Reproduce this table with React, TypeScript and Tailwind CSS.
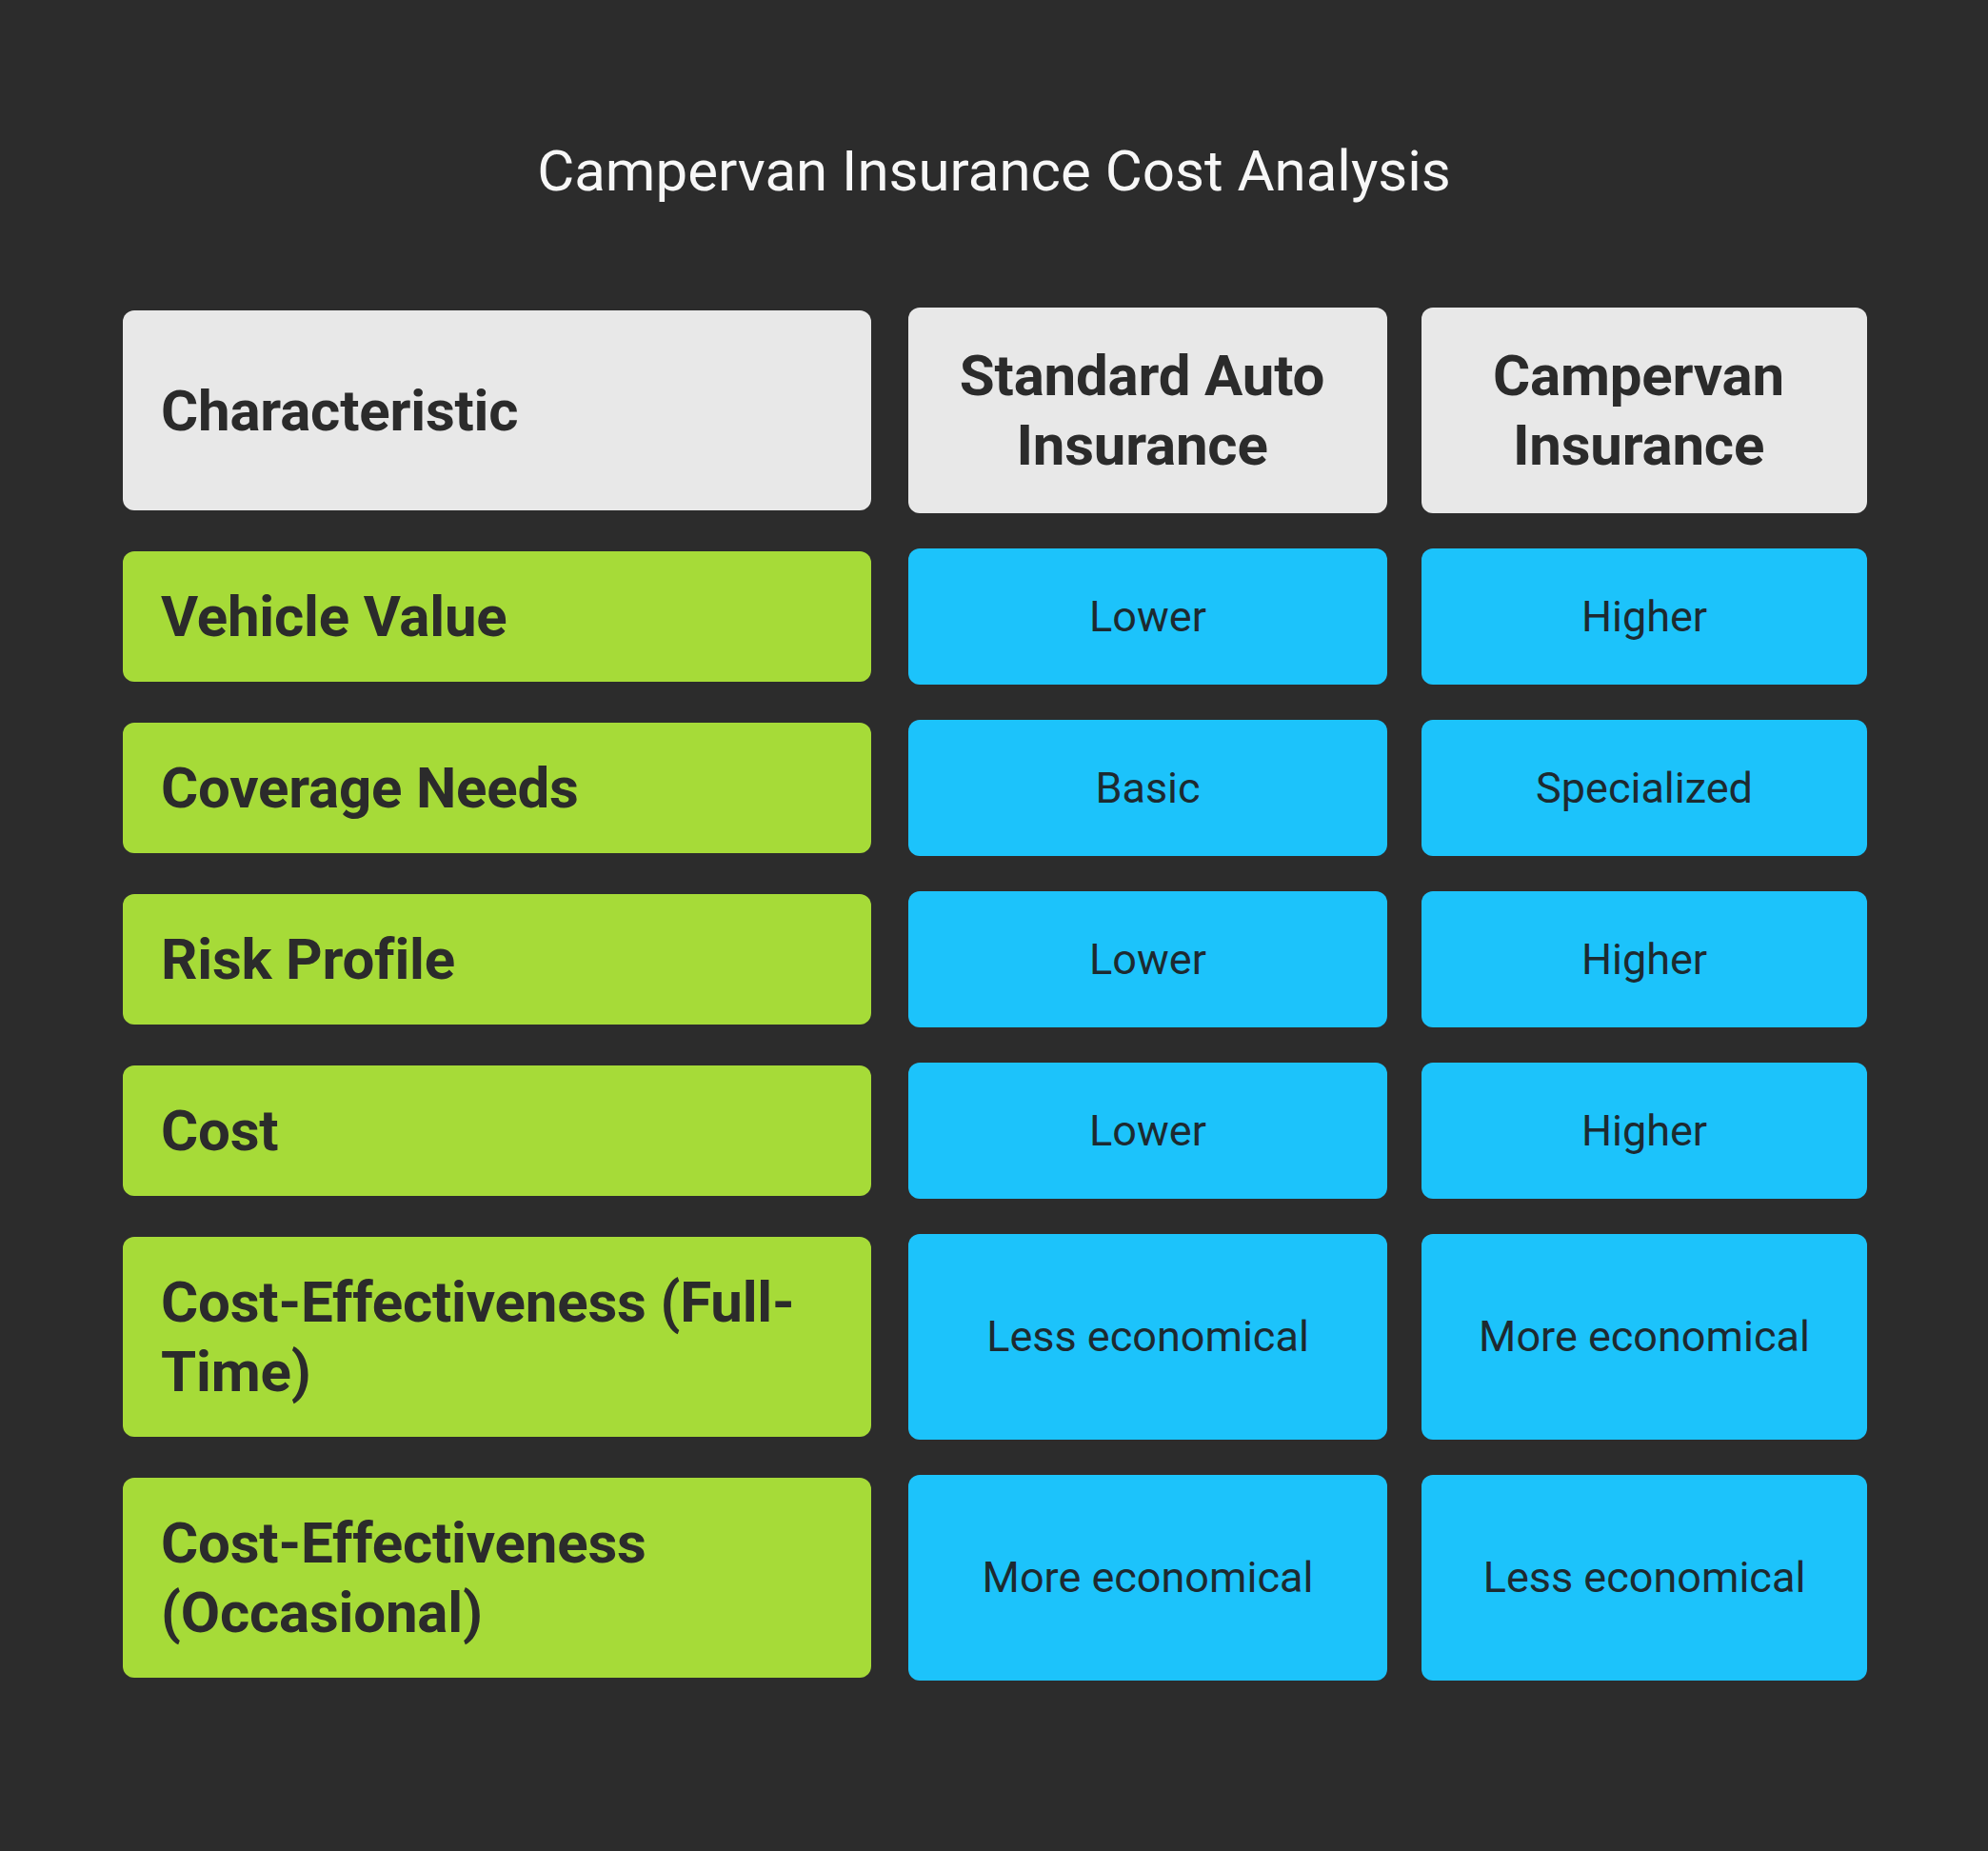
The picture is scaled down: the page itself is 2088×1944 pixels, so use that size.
const rows = [
  { label: "Vehicle Value", standard: "Lower", campervan: "Higher" },
  { label: "Coverage Needs", standard: "Basic", campervan: "Specialized" },
  { label: "Risk Profile", standard: "Lower", campervan: "Higher" },
  { label: "Cost", standard: "Lower", campervan: "Higher" },
  {
    label: "Cost-Effectiveness (Full-Time)",
    standard: "Less economical",
    campervan: "More economical",
  },
  {
    label: "Cost-Effectiveness (Occasional)",
    standard: "More economical",
    campervan: "Less economical",
  },
];

export default function App() {
  return (
    <div
      className="min-h-screen w-full bg-[#2c2c2c] px-[126px] pt-[144px] pb-[180px]"
      style={{ fontFamily: "Roboto, 'Liberation Sans', sans-serif" }}
    >
      {/* Title */}
      <h1 className="text-center text-[60px] leading-[72px] font-normal text-[#f7f7f7]">
        Campervan Insurance Cost Analysis
      </h1>

      {/* Table */}
      <div className="mt-[107px] grid grid-cols-[792px_503px_468px] gap-x-[36px] gap-y-[37px]">
        {/* Header row */}
        <div className="m-[3px] flex items-center rounded-[12px] bg-[#e8e8e8] pl-[40px] pr-[34px] py-[32px] text-[60px] leading-[73px] font-bold tracking-[-0.2px] text-[#2b2b2b]">
          Characteristic
        </div>
        <div className="flex items-center justify-center rounded-[12px] bg-[#e8e8e8] pl-[34px] pr-[46px] py-[35px] text-center text-[60px] leading-[73px] font-bold tracking-[-0.2px] text-[#2b2b2b]">
          Standard Auto Insurance
        </div>
        <div className="flex items-center justify-center rounded-[12px] bg-[#e8e8e8] pl-[34px] pr-[46px] py-[35px] text-center text-[60px] leading-[73px] font-bold tracking-[-0.2px] text-[#2b2b2b]">
          Campervan Insurance
        </div>

        {/* Body rows */}
        {rows.map((row) => (
          <div key={row.label} className="contents">
            <div className="m-[3px] flex items-center rounded-[12px] bg-[#a6db38] pl-[40px] pr-[34px] py-[32px] text-[60px] leading-[73px] font-bold tracking-[-0.2px] text-[#2b2b2b]">
              {row.label}
            </div>
            <div className="flex items-center justify-center rounded-[12px] bg-[#1cc3fb] px-[20px] text-center text-[45px] font-normal text-[#1d2a30]">
              {row.standard}
            </div>
            <div className="flex items-center justify-center rounded-[12px] bg-[#1cc3fb] px-[20px] text-center text-[45px] font-normal text-[#1d2a30]">
              {row.campervan}
            </div>
          </div>
        ))}
      </div>
    </div>
  );
}
